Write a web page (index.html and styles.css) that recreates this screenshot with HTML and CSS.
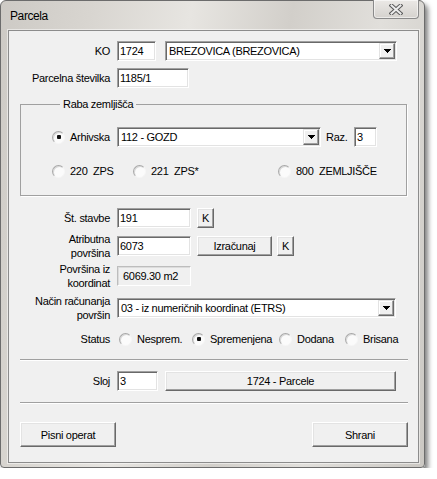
FILE: index.html
```html
<!DOCTYPE html>
<html lang="sl">
<head>
<meta charset="utf-8">
<title>Parcela</title>
<link rel="stylesheet" href="styles.css">
</head>
<body>
<div class="window">
  <div class="titlebar">
    <span class="title">Parcela</span>
    <span class="close">
      <svg width="14" height="11" viewBox="0 0 14 11">
        <path d="M2.5 1.5 L11.5 9.5 M11.5 1.5 L2.5 9.5" stroke="#5a5a5a" stroke-width="4" stroke-linecap="square" fill="none"/>
        <path d="M2.5 1.5 L11.5 9.5 M11.5 1.5 L2.5 9.5" stroke="#ececec" stroke-width="2" stroke-linecap="square" fill="none"/>
      </svg>
    </span>
  </div>
  <div class="client">
    <div class="row">
      <span class="lbl">KO</span>
      <span class="field w39">1724</span>
      <span class="combo w232 ml9"><span class="ctext">BREZOVICA (BREZOVICA)</span><span class="dd"><svg width="7" height="4" viewBox="0 0 7 4"><rect x="0" y="0" width="7" height="1"/><rect x="1" y="1" width="5" height="1"/><rect x="2" y="2" width="3" height="1"/><rect x="3" y="3" width="1" height="1"/></svg></span></span>
    </div>
    <div class="row mt7">
      <span class="lbl">Parcelna številka</span>
      <span class="field w72">1185/1</span>
    </div>

    <fieldset class="group">
      <legend>Raba zemljišča</legend>
      <div class="grow">
        <span class="opt w65"><span class="rb on"></span>Arhivska</span>
        <span class="combo w204"><span class="ctext">112 - GOZD</span><span class="dd"><svg width="7" height="4" viewBox="0 0 7 4"><rect x="0" y="0" width="7" height="1"/><rect x="1" y="1" width="5" height="1"/><rect x="2" y="2" width="3" height="1"/><rect x="3" y="3" width="1" height="1"/></svg></span></span>
        <span class="raz">Raz.</span>
        <span class="field w23">3</span>
      </div>
      <div class="grow mt17">
        <span class="opt w81"><span class="rb"></span>220&nbsp; ZPS</span>
        <span class="opt w145"><span class="rb"></span>221&nbsp; ZPS*</span>
        <span class="opt"><span class="rb"></span>800&nbsp; ZEMLJIŠČE</span>
      </div>
    </fieldset>

    <div class="row mt12">
      <span class="lbl">Št. stavbe</span>
      <span class="field w74">191</span>
      <span class="btn w17 ml6">K</span>
    </div>
    <div class="row two mt4">
      <span class="lbl">Atributna<br>površina</span>
      <span class="field w74">6073</span>
      <span class="btn w75 ml6">Izračunaj</span>
      <span class="btn w17 ml5">K</span>
    </div>
    <div class="row two mt2">
      <span class="lbl">Površina iz<br>koordinat</span>
      <span class="ro w74">6069.30 m2</span>
    </div>
    <div class="row two mt4">
      <span class="lbl">Način računanja<br>površin</span>
      <span class="combo w279"><span class="ctext">03 - iz numeričnih koordinat (ETRS)</span><span class="dd"><svg width="7" height="4" viewBox="0 0 7 4"><rect x="0" y="0" width="7" height="1"/><rect x="1" y="1" width="5" height="1"/><rect x="2" y="2" width="3" height="1"/><rect x="3" y="3" width="1" height="1"/></svg></span></span>
    </div>
    <div class="row status mt10">
      <span class="lbl">Status</span>
      <span class="opt w73 ml2"><span class="rb"></span>Nesprem.</span>
      <span class="opt w87"><span class="rb on"></span>Spremenjena</span>
      <span class="opt w66"><span class="rb"></span>Dodana</span>
      <span class="opt"><span class="rb"></span>Brisana</span>
    </div>

    <div class="sep mt13"></div>

    <div class="row mt10">
      <span class="lbl sloj">Sloj</span>
      <span class="field w41">3</span>
      <span class="btn w231 ml7">1724 - Parcele</span>
    </div>

    <div class="sep mt11"></div>

    <div class="actions">
      <span class="btn big">Pisni operat</span>
      <span class="btn big">Shrani</span>
    </div>
  </div>
</div>
</body>
</html>
```

FILE: styles.css
```css
* { box-sizing: border-box; }
html, body { margin: 0; padding: 0; background: #ffffff; }
body {
  font-family: "Liberation Sans", Arial, sans-serif;
  font-size: 11px;
  letter-spacing: -0.3px;
  color: #000;
}

.window {
  width: 425px;
  height: 468px;
  border: 1px solid #6c6c6c;
  border-radius: 6px 6px 4px 4px;
  background: linear-gradient(100deg, #cdcac5 0%, #d8d5d0 18%, #e7e5e1 38%, #d2cfca 58%, #e1dfdb 76%, #cbc8c3 100%);
  box-shadow: 3px 4px 5px rgba(0, 0, 0, 0.5);
  display: flex;
  flex-direction: column;
}

.titlebar {
  height: 29px;
  display: flex;
  align-items: flex-start;
}
.title {
  padding: 8px 0 0 9px;
  font-size: 12px;
  letter-spacing: -0.4px;
  line-height: 14px;
}
.close {
  margin: -1px 5px 0 auto;
  width: 46px;
  height: 19px;
  border: 1px solid #8a8a8a;
  border-top: none;
  border-radius: 0 0 4px 4px;
  background: linear-gradient(#ebe9e6, #d5d2ce);
  box-shadow: inset 0 0 0 1px rgba(255, 255, 255, 0.55);
  display: flex;
  align-items: center;
  justify-content: center;
}
.close svg { display: block; margin-top: 1px; }

.client {
  margin-left: 7px;
  width: 411px;
  height: 433px;
  border: 1px solid #8c8c8c;
  background: #f0f0f0;
  box-shadow: 0 0 0 1px rgba(255, 255, 255, 0.5);
  padding: 10px 10px 0 11px;
}

.row {
  display: flex;
  align-items: center;
  height: 20px;
}
.row.two { height: 28px; }
.row.status { height: 14px; }

.lbl {
  width: 90px;
  flex-shrink: 0;
  text-align: right;
  margin-right: 7px;
  line-height: 14px;
  white-space: nowrap;
}

.field {
  height: 20px;
  background: #fff;
  border: 1px solid;
  border-color: #a0a0a0 #ffffff #ffffff #a0a0a0;
  box-shadow: inset 1px 1px 0 #696969, inset -1px -1px 0 #e3e3e3;
  padding: 0 0 0 2px;
  line-height: 18px;
  flex-shrink: 0;
}
.ro {
  height: 20px;
  background: #f0f0f0;
  border: 1px solid;
  border-color: #bdbdbd #ffffff #ffffff #bdbdbd;
  box-shadow: inset 1px 1px 0 #dcdcdc;
  padding-left: 5px;
  line-height: 18px;
  flex-shrink: 0;
}

.combo {
  height: 20px;
  display: flex;
  align-items: stretch;
  background: #fff;
  border: 1px solid;
  border-color: #a0a0a0 #ffffff #ffffff #a0a0a0;
  box-shadow: inset 1px 1px 0 #696969, inset -1px -1px 0 #e3e3e3;
  padding: 1px;
  flex-shrink: 0;
}
.ctext {
  flex: 1;
  padding-left: 2px;
  line-height: 16px;
  white-space: nowrap;
  overflow: hidden;
}
.dd {
  width: 16px;
  background: #f0f0f0;
  border: 1px solid;
  border-color: #e3e3e3 #696969 #696969 #e3e3e3;
  box-shadow: inset -1px -1px 0 #a0a0a0, inset 1px 1px 0 #ffffff;
  display: flex;
  align-items: center;
  justify-content: center;
}
.dd svg { display: block; fill: #000; }

.btn {
  height: 20px;
  background: #f0f0f0;
  border: 1px solid;
  border-color: #ffffff #696969 #696969 #ffffff;
  box-shadow: inset -1px -1px 0 #a0a0a0, inset 1px 1px 0 #e3e3e3;
  display: flex;
  align-items: center;
  justify-content: center;
  flex-shrink: 0;
  white-space: nowrap;
}
.btn.big { width: 96px; height: 25px; }

.group {
  margin: 9px 1px 0 0;
  padding: 16px 0 17px 31px;
  border: 1px solid #a0a0a0;
  box-shadow: 1px 1px 0 #ffffff;
  min-width: 0;
}
.group legend {
  margin-left: 8px;
  padding: 0 3px;
  line-height: 14px;
}
.grow {
  display: flex;
  align-items: center;
  height: 20px;
}
.grow.mt17 { height: 14px; }

.opt {
  display: flex;
  align-items: center;
  white-space: nowrap;
  flex-shrink: 0;
}
.rb {
  width: 13px;
  height: 13px;
  border-radius: 50%;
  border: 1px solid;
  border-color: #a8a8a8 #f6f6f6 #f6f6f6 #a8a8a8;
  background: #fbfbfb;
  box-shadow: inset 1px 1px 0 #d8d8d8;
  margin-right: 5px;
  display: flex;
  align-items: center;
  justify-content: center;
  flex-shrink: 0;
}
.rb.on::after {
  content: "";
  width: 4px;
  height: 4px;
  border-radius: 1px;
  background: #111;
}

.raz { width: 28px; margin-left: 5px; }

.sep {
  height: 2px;
  border-top: 1px solid #a0a0a0;
  border-bottom: 1px solid #ffffff;
}

.actions {
  margin-top: 18px;
  display: flex;
  justify-content: space-between;
}

.w17 { width: 17px; }
.w23 { width: 23px; }
.w39 { width: 39px; }
.w41 { width: 41px; }
.w65 { width: 65px; }
.w66 { width: 66px; }
.w72 { width: 72px; }
.w73 { width: 73px; }
.w74 { width: 74px; }
.w75 { width: 75px; }
.w81 { width: 81px; }
.w87 { width: 87px; }
.w145 { width: 145px; }
.w204 { width: 204px; }
.w231 { width: 231px; }
.w232 { width: 232px; }
.w279 { width: 279px; }

.ml2 { margin-left: 2px; }
.ml5 { margin-left: 5px; }
.ml6 { margin-left: 6px; }
.ml7 { margin-left: 7px; }
.ml9 { margin-left: 9px; }
.mt2 { margin-top: 2px; }
.mt4 { margin-top: 4px; }
.mt7 { margin-top: 7px; }
.mt10 { margin-top: 10px; }
.mt11 { margin-top: 11px; }
.mt12 { margin-top: 12px; }
.mt13 { margin-top: 13px; }
.mt14 { margin-top: 14px; }
.mt17 { margin-top: 17px; }
```
